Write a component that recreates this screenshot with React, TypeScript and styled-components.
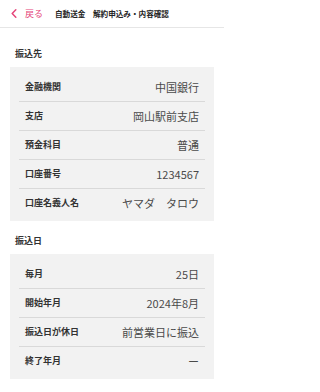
import React from "react";
import styled, { createGlobalStyle } from "styled-components";

const GlobalStyle = createGlobalStyle`
  * {
    box-sizing: border-box;
  }

  body {
    margin: 0;
    background: #ffffff;
    font-family: "Noto Sans CJK JP", "Noto Sans", sans-serif;
    color: #333333;
  }
`;

const Page = styled.div`
  width: 224px;
  min-height: 392px;
  background: #ffffff;
`;

const Header = styled.header`
  display: flex;
  align-items: center;
  height: 28px;
  padding: 0 0 0 11px;
  border-bottom: 1px solid #e6e6e6;
`;

const BackButton = styled.button`
  display: flex;
  align-items: center;
  gap: 8px;
  padding: 0;
  border: none;
  background: none;
  font-family: inherit;
  font-size: 9px;
  line-height: 12px;
  color: #e5467a;
  cursor: pointer;
`;

const Title = styled.h1`
  margin: 0 0 0 12px;
  font-size: 7.6px;
  line-height: 12px;
  font-weight: 700;
  color: #222222;
  white-space: nowrap;
`;

const Section = styled.section<{ $first?: boolean }>`
  padding-top: ${(props) => (props.$first ? "20px" : "14px")};
`;

const SectionTitle = styled.h2`
  margin: 0 0 0 15px;
  font-size: 9px;
  line-height: 12px;
  font-weight: 700;
  color: #333333;
`;

const Card = styled.div`
  margin: 7px 10px 0;
  padding: 6px 9px 4px;
  background: #f2f2f2;
`;

const Row = styled.div`
  display: flex;
  justify-content: space-between;
  align-items: center;
  height: 29px;
  padding: 0 6px;
  border-bottom: 1px solid #d9d9d9;

  &:last-child {
    height: 28px;
    border-bottom: none;
  }
`;

const Label = styled.span`
  font-size: 9px;
  line-height: 12px;
  font-weight: 700;
  color: #333333;
`;

const Value = styled.span`
  font-size: 11px;
  line-height: 14px;
  font-weight: 400;
  color: #4a4a4a;
  white-space: pre;
`;

interface Item {
  label: string;
  value: string;
}

const payee: Item[] = [
  { label: "金融機関", value: "中国銀行" },
  { label: "支店", value: "岡山駅前支店" },
  { label: "預金科目", value: "普通" },
  { label: "口座番号", value: "1234567" },
  { label: "口座名義人名", value: "ヤマダ　タロウ" },
];

const schedule: Item[] = [
  { label: "毎月", value: "25日" },
  { label: "開始年月", value: "2024年8月" },
  { label: "振込日が休日", value: "前営業日に振込" },
  { label: "終了年月", value: "ー" },
];

const ChevronLeft = () => (
  <svg width="6" height="9" viewBox="0 0 6 9" fill="none">
    <path d="M4.8 0.8 L1.2 4.5 L4.8 8.2" stroke="#e5467a" strokeWidth="1.5" strokeLinecap="round" strokeLinejoin="round" />
  </svg>
);

const DetailCard: React.FC<{ items: Item[] }> = ({ items }) => (
  <Card>
    {items.map((item) => (
      <Row key={item.label}>
        <Label>{item.label}</Label>
        <Value>{item.value}</Value>
      </Row>
    ))}
  </Card>
);

export default function App() {
  return (
    <>
      <GlobalStyle />
      <Page>
        <Header>
          <BackButton>
            <ChevronLeft />
            戻る
          </BackButton>
          <Title>自動送金　解約申込み・内容確認</Title>
        </Header>
        <Section $first>
          <SectionTitle>振込先</SectionTitle>
          <DetailCard items={payee} />
        </Section>
        <Section>
          <SectionTitle>振込日</SectionTitle>
          <DetailCard items={schedule} />
        </Section>
      </Page>
    </>
  );
}
